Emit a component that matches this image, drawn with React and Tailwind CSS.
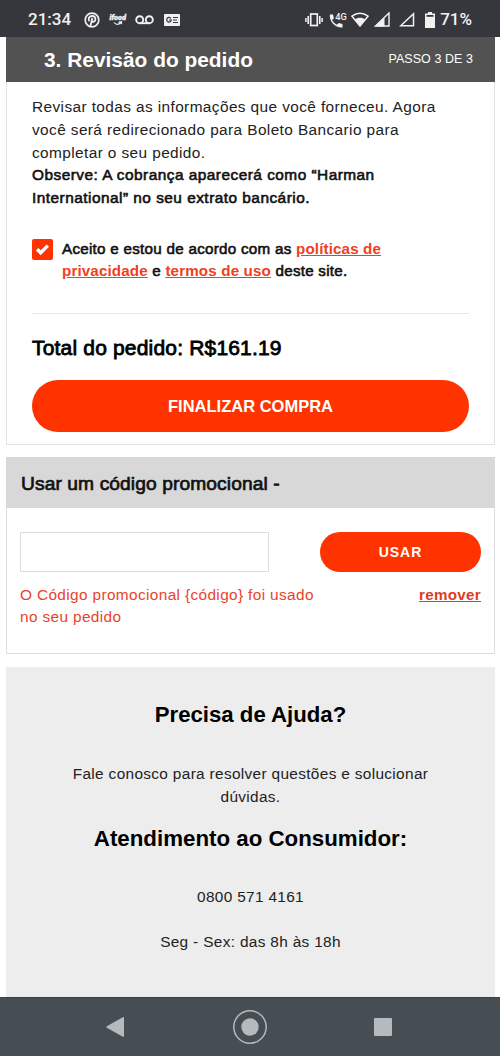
function StatusBar() {
  return (
    <div className="flex h-[37px] items-center bg-[#36373c] pt-0.5 pl-7 font-['Roboto'] text-[17px] font-medium text-[#f1f1f2]">
      <span className="w-[56px]">21:34</span>
      <svg className="h-4 w-4" viewBox="0 0 16 16" fill="none" stroke="currentColor">
        <circle cx="8" cy="8" r="6.800" strokeWidth="1.700" />
        <path d="M5.300 9.200C3.600 6.300 5.500 4 8.200 4c2.400 0 3.600 1.600 3.200 3.500-.4 2-2.300 3.100-3.600 1.900M8.400 6L6.300 14.500" strokeWidth="1.800" />
      </svg>
      <svg className="ml-[9px] h-4 w-[18px]" viewBox="0 0 18 16" fill="none" stroke="currentColor">
        <text x="0.500" y="8" fontSize="8" fontWeight="900" fontStyle="italic" textLength="16.500" lengthAdjust="spacingAndGlyphs" fill="currentColor" strokeWidth=".4">ifood</text>
        <path d="M5 10.500c2 2.500 5 2.500 7.500-.5M9.500 10.200l3-.4v2.500" strokeWidth="1.200" />
      </svg>
      <svg className="ml-2 h-2.5 w-[19px]" viewBox="0 0 19 10" fill="none" stroke="currentColor" strokeWidth="1.900">
        <circle cx="4.700" cy="4.700" r="3.500" />
        <circle cx="14.300" cy="4.700" r="3.500" />
        <path d="M4.700 8.200h9.600" />
      </svg>
      <svg className="ml-2.5 h-3 w-[16px]" viewBox="0 0 16 12">
        <rect width="16" height="12" rx="1" fill="currentColor" />
        <path d="M6.800 4.300A2.300 2.300 0 1 0 7.300 6H5M9 3.500h5M9 6h4M9 8.500h5" fill="none" stroke="#36373c" strokeWidth="1.200" />
      </svg>

      <svg className="ml-auto h-[14px] w-[18px]" viewBox="0 0 18 14" fill="none" stroke="currentColor">
        <rect x="5.700" y="1" width="6.600" height="11.500" strokeWidth="1.700" />
        <path d="M3.200 3v8M14.800 3v8" strokeWidth="1.600" />
        <path d="M.9 5v4M17.100 5v4" strokeWidth="1.500" />
      </svg>
      <svg className="ml-1.5 h-[18px] w-[18px]" viewBox="0 0 18 18" fill="currentColor">
        <path d="M.8 3.500h3.200l.9 3.700-1.800 1.900c1.200 2.300 2.600 3.500 4.800 4.700l1.900-1.800 3.700.9v3.600C6.300 17 .4 11.200.8 3.500z" />
        <text x="6.300" y="8.500" fontSize="8.500" textLength="11.500" lengthAdjust="spacingAndGlyphs">4G</text>
      </svg>
      <svg className="ml-1 h-[15px] w-[18px]" viewBox="0 0 18 15">
        <path d="M1 4.200C5.800.2 12.200.2 17 4.200L9 14z" fill="none" stroke="currentColor" strokeWidth="1.500" />
        <path d="M3.600 7.500c3-2.500 7.800-2.500 10.800 0L9 14z" fill="currentColor" />
      </svg>
      <svg className="ml-[5px] h-[15px] w-[16px]" viewBox="0 0 16 15">
        <path d="M1.500 14L15 1v13z" fill="none" stroke="currentColor" strokeWidth="1.400" />
        <path d="M1 14.500L10.500 5.500v9z" fill="currentColor" />
      </svg>
      <svg className="ml-[9px] h-[15px] w-[16px]" viewBox="0 0 16 15">
        <path d="M1.800 13.800L14.500 1.800v12z" fill="none" stroke="currentColor" strokeWidth="1.500" />
      </svg>
      <svg className="ml-2.5 h-4 w-[10px]" viewBox="0 0 10 16" fill="currentColor">
        <path d="M3 0h4v1.500h3V16H0V1.500h3z" />
        <path d="M1.500 3h7v1.800h-7z" fill="#36373c" />
      </svg>
      <span className="mr-[28px] ml-[5px]">71%</span>
    </div>
  );
}

function NavBar() {
  return (
    <div className="flex h-[59px] items-center border-t border-[#3b4247] bg-[#464d53] text-[#b5babe]">
      <svg className="ml-[106px] h-5 w-[18px]" viewBox="0 0 18 20" fill="currentColor">
        <path d="M18 .5v18.500a.8.8 0 0 1-1.200.7L.8 10.700a.8.800 0 0 1 0-1.400L16.800.300A.8.800 0 0 1 18 .5z" />
      </svg>
      <svg className="ml-[109px] h-[34px] w-[34px]" viewBox="0 0 34 34">
        <circle cx="17" cy="17" r="16.200" fill="none" stroke="currentColor" strokeWidth="1.500" />
        <circle cx="17" cy="17" r="8.700" fill="currentColor" />
      </svg>
      <div className="ml-[107px] h-[18px] w-[18px] rounded-[1px] bg-[#b5babe]" />
    </div>
  );
}

export default function App() {
  return (
    <div className="h-[1056px] w-[500px] overflow-hidden bg-white font-['Liberation_Sans',sans-serif] whitespace-nowrap text-[#222]">
      <StatusBar />

      <div className="mr-[5px] ml-1.5 h-[960px]">
        <section className="h-[408px] border border-t-0 border-[#e3e3e3]">
          <div className="-mx-px flex h-[45px] items-center justify-between bg-[#525252] pr-[22px] pl-[38px] text-white">
            <h1 className="text-[20.9px] font-bold">3. Revisão do pedido</h1>
            <span className="text-[12.5px] tracking-[0.06px]">PASSO 3 DE 3</span>
          </div>
          <div className="pt-[14px] pr-[25px] pl-[25px]">
            <p className="text-[15.4px] leading-[22.75px] tracking-[0.4px]">
              Revisar todas as informações que você forneceu. Agora<br />
              você será redirecionado para Boleto Bancario para<br />
              completar o seu pedido.<br />
              <span className="tracking-[0.48px] text-[#111] [-webkit-text-stroke:0.6px]">
                Observe: A cobrança aparecerá como “Harman<br />
                International” no seu extrato bancário.
              </span>
            </p>
            <div className="mt-7 flex h-[76px] border-b border-[#e8e8e8]">
              <div className="mt-[1px] flex h-[21px] w-[21px] items-center justify-center rounded-[2px] bg-[#ff3300]">
                <svg className="h-[13px] w-[13px]" viewBox="0 0 13 13" fill="none" stroke="#fff" strokeWidth="3.400">
                  <path d="M1.200 6.300l3.500 3.500L11.800 2.600" />
                </svg>
              </div>
              <p className="ml-[9px] text-[15.2px] leading-[22px] text-[#111]">
                <span className="tracking-[0.27px] [-webkit-text-stroke:0.6px]">Aceito e estou de acordo com as </span>
                <a className="font-bold tracking-[0.12px] text-[#f0401c] underline">políticas de</a><br />
                <a className="font-bold tracking-[0.12px] text-[#f0401c] underline">privacidade</a>
                <span className="tracking-[0.25px] [-webkit-text-stroke:0.6px]"> e </span>
                <a className="font-bold tracking-[0.14px] text-[#f0401c] underline">termos de uso</a>
                <span className="tracking-[0.25px] [-webkit-text-stroke:0.6px]"> deste site.</span>
              </p>
            </div>
            <p className="mt-[21px] text-[21px] leading-[26px] tracking-[0.18px] text-black [-webkit-text-stroke:0.8px]">Total do pedido: R$161.19</p>
            <button className="mt-[19px] h-[52px] w-full rounded-full bg-[#ff3300] pt-px text-[16.5px] font-bold text-white">FINALIZAR COMPRA</button>
          </div>
        </section>

        <section className="mt-3 h-[197px] border border-t-0 border-[#dedede]">
          <h2 className="-mx-px flex h-[51px] items-center bg-[#d8d8d8] pt-[3px] pl-[15px] text-[19.2px] tracking-[0.1px] text-[#111] [-webkit-text-stroke:0.7px]">Usar um código promocional -</h2>
          <div className="px-[13px] pt-6">
            <div className="flex justify-between">
              <input className="h-10 w-[249px] border border-[#dcdcdc]" />
              <button className="h-10 w-[161px] rounded-full bg-[#ff3300] pt-px text-[14px] font-bold tracking-[1px] text-white">USAR</button>
            </div>
            <div className="mt-3 flex justify-between text-[#e8442a]">
              <p className="text-[15.4px] leading-[22px] tracking-[0.36px]">O Código promocional {'{código}'} foi usado<br />no seu pedido</p>
              <a className="text-[15.2px] leading-[22px] font-bold tracking-[0.28px] text-[#e03c20] underline">remover</a>
            </div>
          </div>
        </section>

        <section className="mt-[13px] h-[330px] bg-[#ededed] pt-[34px] text-center text-[15.4px] leading-[22.75px] tracking-[0.33px]">
          <h2 className="text-[22.2px] leading-7 font-bold tracking-normal text-black">Precisa de Ajuda?</h2>
          <p className="mt-[34px]">Fale conosco para resolver questões e solucionar<br />dúvidas.</p>
          <h2 className="mt-4 text-[22.3px] leading-7 font-bold tracking-normal text-black">Atendimento ao Consumidor:</h2>
          <p className="mt-[33px]">0800 571 4161</p>
          <p className="mt-[23px]">Seg - Sex: das 8h às 18h</p>
        </section>
      </div>

      <NavBar />
    </div>
  );
}
